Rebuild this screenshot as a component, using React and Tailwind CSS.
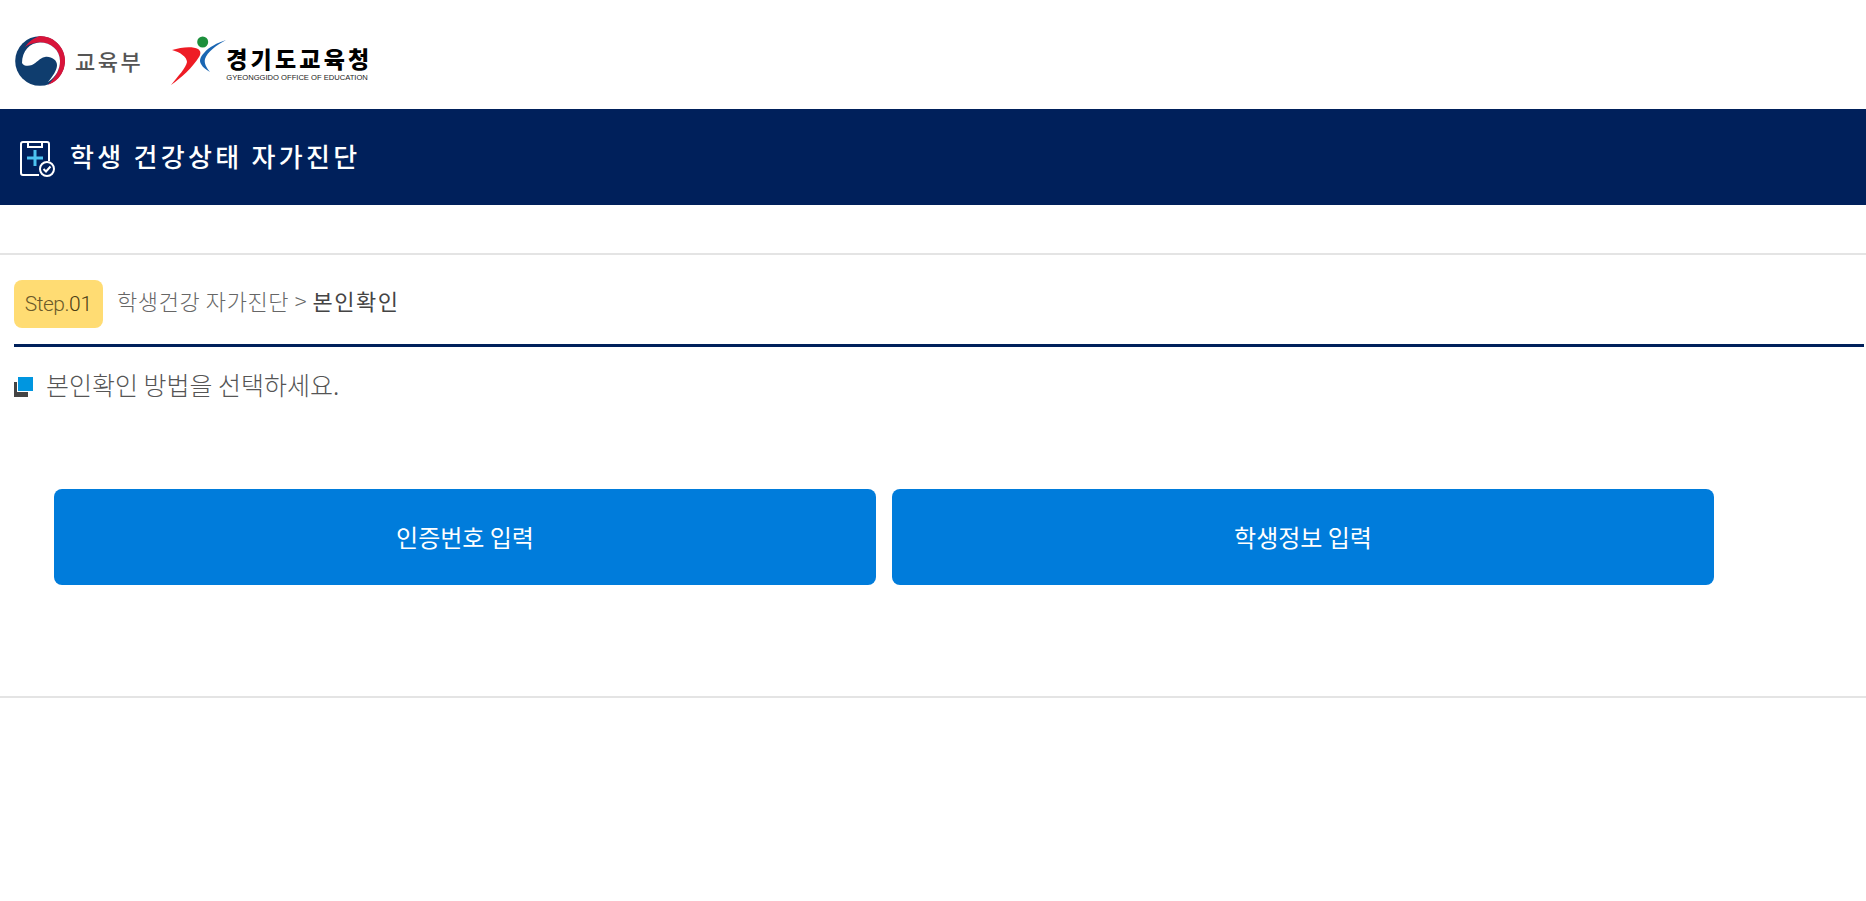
const kr = { fontFamily: '"Noto Sans CJK KR", "Noto Sans", sans-serif' }

function MoeLogo() {
  return (
    <svg width="50" height="50" viewBox="0 0 50 50" className="shrink-0">
      <circle cx="25" cy="25" r="24.8" fill="#0f3d6e" />
      <path d="M10 11 C14 5 19 2 25 0 A25 25 0 0 1 33 48.7 C41 41 45 33 45 25 C45 14 36 6.5 25 6.5 C19 6.5 14 8 10 11 Z" fill="#d8143a" />
      <path d="M7 27 C7 15 15 6.5 25 6.5 C36 6.5 45 14 45 25 C45 33 41 41 33 46 C38 40 42 34 42 29 C42 24 36 20 30 21 C24 22 22 27 17 29 C13 30.5 8.5 30 7 27 Z" fill="#fff" />
    </svg>
  )
}

function GoeSymbol() {
  return (
    <svg width="62" height="56" viewBox="0 0 62 56" className="shrink-0 mt-[-2px]">
      <circle cx="35.7" cy="10" r="5.5" fill="#1c8f3c" />
      <path d="M5 18 C14 15 26 14 31 17 C34 19 34 22 32 25 C26 35 14 46 4 53 C11 44 19 36 20 30 C20 25 13 20 5 18 Z" fill="#ee1c25" />
      <path d="M59 8 C50 11 42 15 37 21 C33 25 32 29 34 32 C36 36 40 38 43 40 C39 35 37 31 38 27 C40 20 50 13 59 8 Z" fill="#1a66b3" />
    </svg>
  )
}

function ClipboardIcon() {
  return (
    <svg width="36" height="40" viewBox="0 0 36 40" className="shrink-0">
      <path d="M19 38 H3 A2 2 0 0 1 1 36 V7 A2 2 0 0 1 3 5 H27 A2 2 0 0 1 29 7 V24" fill="none" stroke="#fff" strokeWidth="2" />
      <path d="M8 5 V10 H22 V5" fill="none" stroke="#fff" strokeWidth="2" />
      <path d="M15 13 V29 M7 21 H23" fill="none" stroke="#4cc3f1" strokeWidth="3" />
      <circle cx="27" cy="32" r="7" fill="#00205b" stroke="#fff" strokeWidth="2" />
      <path d="M23.5 32 L26 34.5 L30.5 29.5" fill="none" stroke="#fff" strokeWidth="2" />
    </svg>
  )
}

export default function App() {
  return (
    <div className="min-h-screen bg-white" style={kr}>
      {/* Logos */}
      <header className="h-[109px] flex items-center pl-[15px] pt-[13px]">
        <MoeLogo />
        <span className="ml-[10px] mb-[2px] text-[22px] font-medium text-[#555] tracking-[2.5px]">교육부</span>
        <div className="ml-[24px] flex items-center">
          <GoeSymbol />
          <div className="ml-[-3px] flex flex-col items-start pt-[5px]">
            <span className="text-[23px] leading-[27px] font-black text-black tracking-[3.2px]">경기도교육청</span>
            <span className="text-[7.6px] leading-[11px] text-[#222] whitespace-nowrap" style={{ fontFamily: '"Liberation Sans", sans-serif' }}>GYEONGGIDO OFFICE OF EDUCATION</span>
          </div>
        </div>
      </header>

      {/* Title band */}
      <div className="h-[96px] bg-[#00205b] flex items-center pl-[20px]">
        <ClipboardIcon />
        <h1 className="ml-[14px] text-[26px] font-medium text-white tracking-[3.3px] mb-[3px]">학생 건강상태 자가진단</h1>
      </div>

      <div className="h-[50px] border-b-2 border-[#e4e4e4]" />

      <main className="pl-[14px] pr-[2px]">
        {/* Step heading */}
        <div className="h-[92px] pt-[25px] border-b-[3px] border-[#00205b]">
          <div className="flex items-center">
            <span className="w-[89px] h-[48px] pt-[2px] rounded-[8px] bg-[#ffdc73] flex items-center justify-center text-[21px] tracking-[-0.5px] font-light text-[#6b5a2a]" style={{ fontFamily: 'Roboto, sans-serif' }}>Step.<span className="text-[#4a3c14] tracking-normal">01</span></span>
            <p className="ml-[14px] mb-[7px] text-[22px] font-light text-[#666] tracking-[0.6px]">
              학생건강 자가진단 &gt; <span className="font-normal text-[#444] tracking-[1.5px]">본인확인</span>
            </p>
          </div>
        </div>

        {/* Instruction */}
        <div className="mt-[19px] flex items-center">
          <span className="relative w-[20px] h-[20px] mt-[4px] shrink-0">
            <span className="absolute left-0 bottom-0 w-[14px] h-[15px] bg-[#444]" />
            <span className="absolute right-[1px] top-0 w-[15px] h-[14px] bg-[#0096e0] border-l border-b border-white box-content" />
          </span>
          <p className="ml-[12px] text-[25px] font-light text-[#555]">본인확인 방법을 선택하세요.</p>
        </div>

        {/* Choices */}
        <div className="mt-[85px] pl-[40px] flex gap-[16px]">
          <button className="w-[822px] h-[96px] rounded-[8px] bg-[#007cdb] text-white text-[24px]">인증번호 입력</button>
          <button className="w-[822px] h-[96px] rounded-[8px] bg-[#007cdb] text-white text-[24px]">학생정보 입력</button>
        </div>
      </main>

      <div className="mt-[111px] border-b-2 border-[#e4e4e4]" />
    </div>
  )
}
